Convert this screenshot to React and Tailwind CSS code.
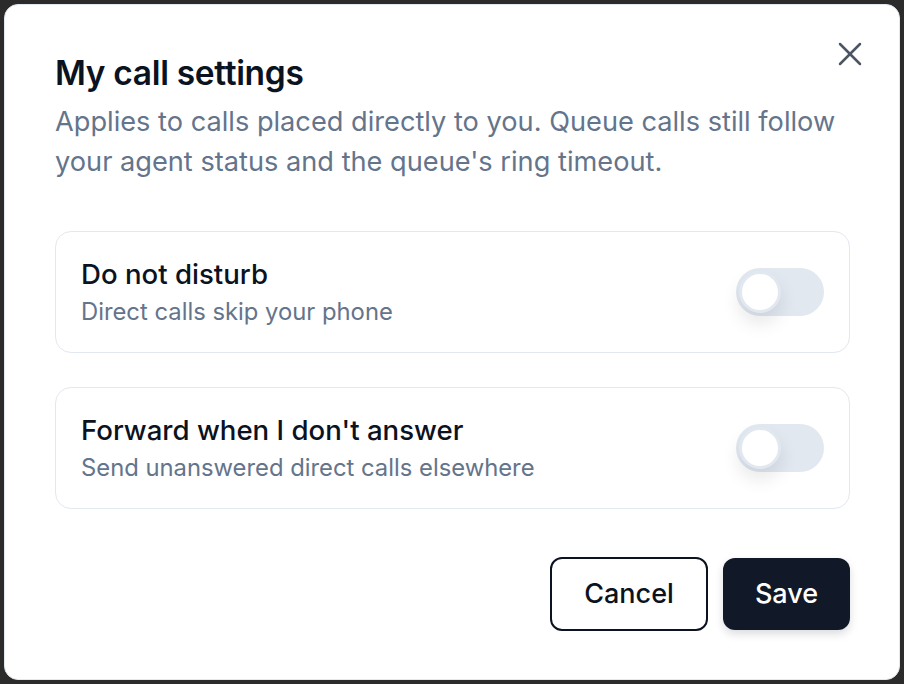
import { X } from "lucide-react";

const rows = [
  { title: "Do not disturb", text: "Direct calls skip your phone" },
  { title: "Forward when I don't answer", text: "Send unanswered direct calls elsewhere" },
];

function Toggle() {
  return (
    <button className="flex h-[48px] w-[88px] shrink-0 items-center rounded-full bg-[#e2e8f0] p-[3px]">
      <span className="h-[42px] w-[42px] rounded-full border-[3px] border-[#e2e8f0] bg-white shadow-[0_10px_18px_rgba(15,23,42,0.10)]" />
    </button>
  );
}

export default function App() {
  return (
    <div className="flex h-[684px] w-[904px] bg-[#2b2b2b] p-[4px] font-['Inter',sans-serif]">
      <div className="relative flex flex-1 flex-col rounded-[14px] border border-[#e2e8f0] bg-white pl-[50px] pr-[49px] pt-[48px] pb-[48px]">
        <button className="absolute right-[29px] top-[29px] text-[#4b5563]" aria-label="Close">
          <X size={40} strokeWidth={1.5} />
        </button>

        <h2 className="text-[33.5px] font-semibold leading-[40px] tracking-[-0.01em] text-[#0b1220]">My call settings</h2>
        <p className="mt-[9px] text-[27.2px] leading-[40px] text-[#64748b]">
          Applies to calls placed directly to you. Queue calls still follow your agent status and the queue's ring timeout.
        </p>

        <div className="mt-[49px] flex flex-col gap-[34px]">
          {rows.map((r) => (
            <div
              key={r.title}
              className="flex h-[122px] items-center justify-between rounded-[16px] border-[1.5px] border-[#e2e8f0] pl-[25px] pr-[25px]"
            >
              <div>
                <p className="text-[27.6px] font-medium leading-[36px] text-[#0b1220]">{r.title}</p>
                <p className="mt-[4px] text-[23.8px] leading-[32px] text-[#64748b]">{r.text}</p>
              </div>
              <Toggle />
            </div>
          ))}
        </div>

        <div className="mt-auto flex justify-end gap-[15px]">
          <button className="h-[74px] w-[158px] rounded-[12px] border-2 border-[#0b1220] bg-white text-[27px] font-medium text-[#0b1220]">
            Cancel
          </button>
          <button className="h-[72px] w-[127px] self-center rounded-[12px] bg-[#111827] text-[27px] font-medium text-white shadow-[0_4px_8px_rgba(15,23,42,0.15)]">
            Save
          </button>
        </div>
      </div>
    </div>
  );
}
